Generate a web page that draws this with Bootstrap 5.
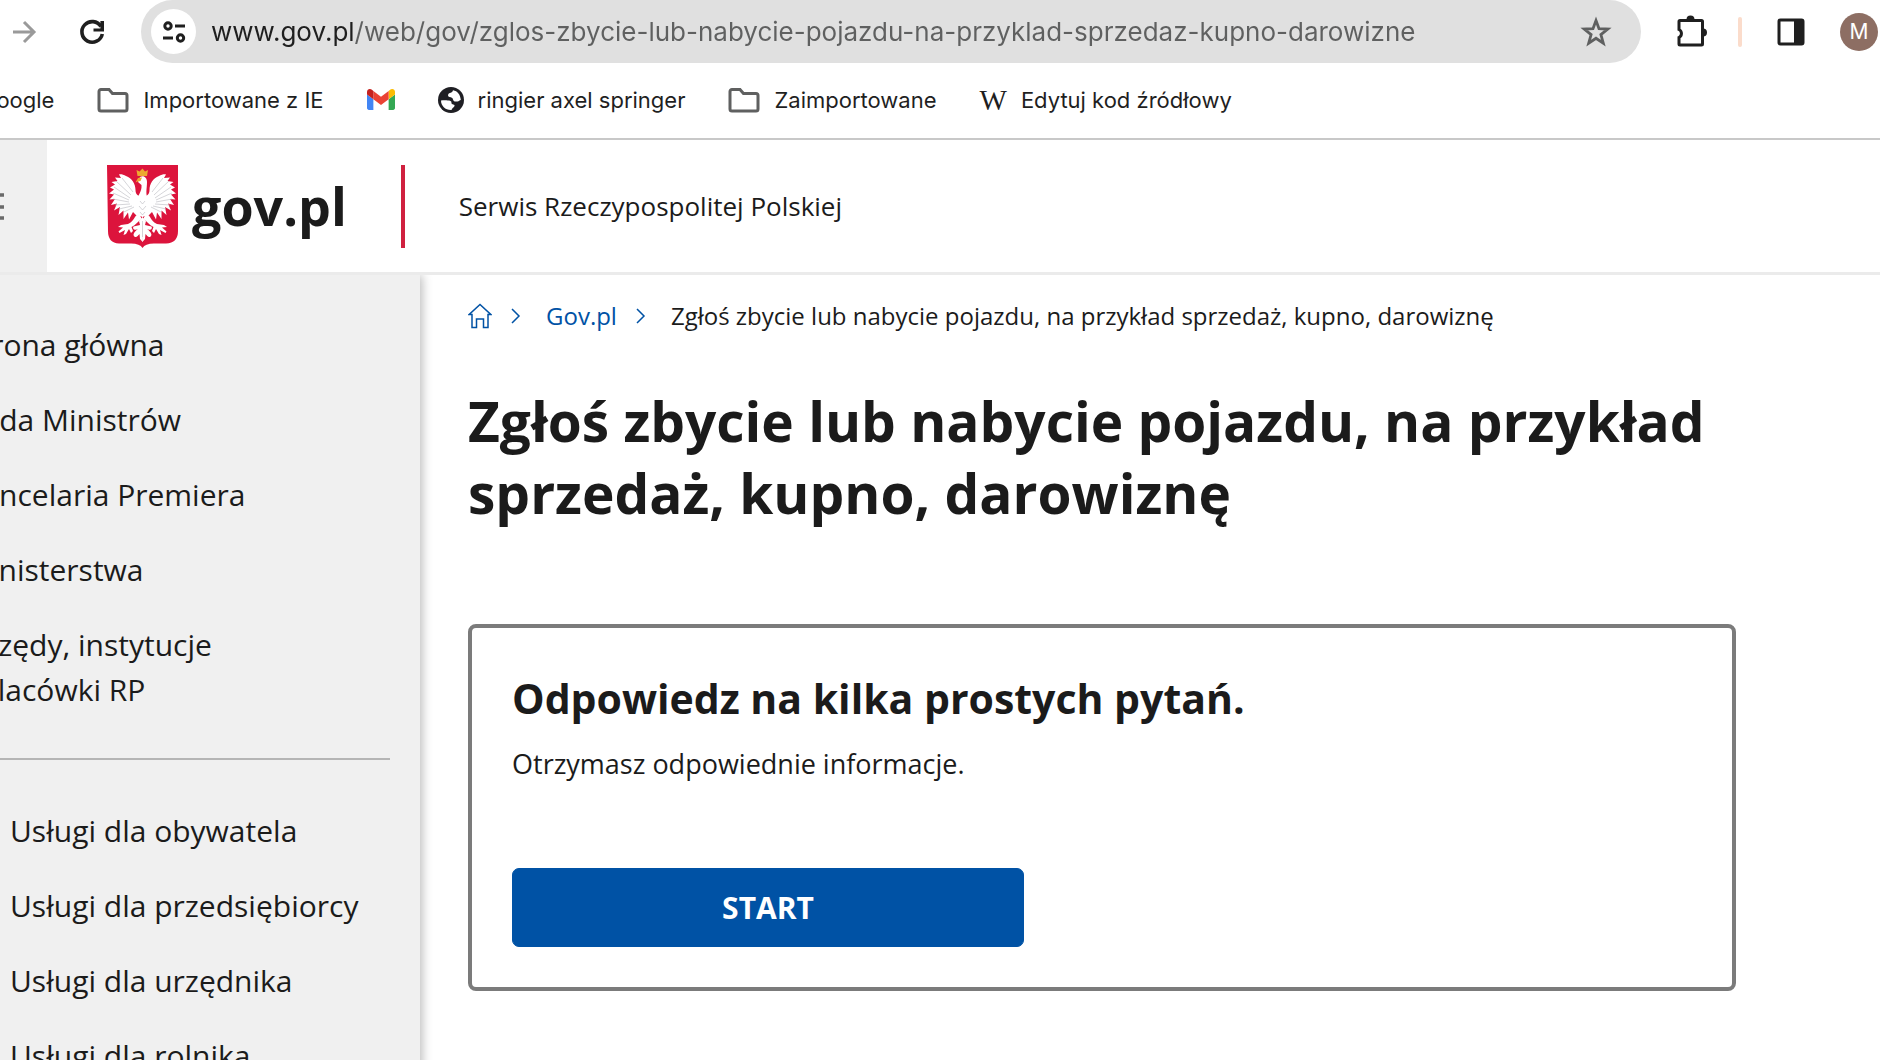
<!DOCTYPE html>
<html lang="pl">
<head>
<meta charset="utf-8">
<meta name="viewport" content="width=device-width, initial-scale=1">
<title>Zgłoś zbycie lub nabycie pojazdu - Gov.pl</title>
<link href="https://cdn.jsdelivr.net/npm/bootstrap@5.3.0/dist/css/bootstrap.min.css" rel="stylesheet">
<style>
  :root { --ink: #1b1b1b; --gov-blue: #0052a5; --panel: #f0f0f0; --rule: #ebebeb; }
  body { font-family: "Open Sans", "Noto Sans", sans-serif; color: var(--ink); background: #fff; }
  svg { display: block; flex: none; }

  /* browser chrome */
  .chrome-ui { font-family: Inter, Roboto, sans-serif; height: 140px; border-bottom: 2px solid #c8c8c8; }
  .toolbar { height: 63px; padding: 0 2px 0 9px; }
  .icon-btn { border: 0; padding: 0; background: none; color: #1f1f1f; }
  .reload { margin-left: 38px; }
  .address { background: #e0e0e0; height: 63px; margin: 0 34px; padding: 0 29px 0 10px; gap: 15px; }
  .site-info { width: 45px; height: 45px; background: #fff; }
  .url-input { border: 0; outline: 0; min-width: 0; padding: 0; font-size: 26px; line-height: 40px; color: #5f6060;
    background: linear-gradient(to right, #1f1f1f 144px, #5f6060 144px); -webkit-background-clip: text; background-clip: text;
    -webkit-text-fill-color: transparent; }
  .peach { width: 4px; height: 30px; margin: 0 35px 0 31px; background: #fbdccb; }
  .avatar { width: 38px; height: 38px; margin-left: 35px; background: #8d6e63; color: #fff; font-size: 21px; }
  .bookmarks { height: 73px; gap: 43px; font-size: 22px; line-height: 32px; }
  .bookmarks a { color: #1f1f1f; text-decoration: none; gap: 14px; white-space: nowrap; }
  .bookmarks .first-mark { margin-left: -20px; }
  .wiki { font-family: "Liberation Serif", serif; font-size: 29px; }

  /* portal header */
  .portal-head { height: 135px; border-bottom: 3px solid var(--rule); background: #fff; z-index: 1; }
  .menu-btn { width: 47px; border: 0; padding: 2px 0 0; background: var(--panel); overflow: hidden; }
  .menu-btn svg { margin-left: -26px; }
  .brand { color: var(--ink); text-decoration: none; margin-left: 60px; gap: 14px; }
  .brand-name { font-size: 52px; line-height: 72px; font-weight: 700; }
  .brand-rule { width: 4px; height: 83px; background: #d0213f; margin: 0 54px; }
  .tagline { font-size: 26px; line-height: 40px; }

  /* side navigation */
  .side { width: 420px; flex: none; background: var(--panel); box-shadow: 2px 0 10px rgba(0,0,0,.28); overflow: hidden; }
  .side-in { margin-left: -36px; padding: 47px 30px 0 0; }
  .side a { display: block; color: var(--ink); text-decoration: none; font-size: 30px; line-height: 45px; padding: 0 0 30px; }
  .side hr { margin: 16px 0 48px; border-top: 2px solid #b5b5b5; opacity: 1; }
  .side .services { padding-left: 46px; }

  /* content */
  .content { padding: 19px 48px; }
  .crumbs { font-size: 24px; line-height: 44px; }
  .crumbs a, .crumbs svg { color: var(--gov-blue); text-decoration: none; }
  .title { font-size: 55px; line-height: 72px; font-weight: 700; margin: 47px 0 95px; max-width: 1268px; }
  .wizard { border: 4px solid #7b7b7b; border-radius: 8px; max-width: 1268px; padding: 40px; }
  .wizard h2 { font-size: 41px; line-height: 60px; font-weight: 700; margin: 0 0 16px; }
  .wizard p { font-size: 27px; line-height: 40px; margin: 0 0 84px; }
  .start-btn { --bs-btn-bg: var(--gov-blue); --bs-btn-border-color: var(--gov-blue); width: 512px; height: 79px; border-radius: 7px; font-size: 30px; font-weight: 700; }
</style>
<script src="https://cdn.jsdelivr.net/npm/bootstrap@5.3.0/dist/js/bootstrap.bundle.min.js"></script>
</head>
<body>
<div class="d-flex flex-column vh-100 overflow-hidden">

  <div class="chrome-ui flex-shrink-0">
    <div class="toolbar d-flex align-items-center">
      <button class="icon-btn" aria-label="Dalej"><svg width="30" height="30" viewBox="0 0 30 30" fill="none" stroke="#9a9a9a" stroke-width="3"><path d="M4 15H24M15 5l10 10L15 25"/></svg></button>
      <button class="icon-btn reload" aria-label="Odśwież"><svg width="30" height="30" viewBox="0 0 30 30"><path d="M24 9.500A10.300 10.300 0 1 0 25.300 17" fill="none" stroke="#1f1f1f" stroke-width="3.600"/><path d="M27 4v10.500H16.500v-3H23.400V4z" fill="#1f1f1f"/></svg></button>
      <div class="address d-flex align-items-center flex-grow-1 rounded-pill">
        <button class="icon-btn site-info rounded-circle d-flex align-items-center justify-content-center flex-shrink-0" aria-label="Informacje o witrynie"><svg width="24" height="24" viewBox="0 0 24 24" fill="none" stroke="#1f1f1f" stroke-width="3"><circle cx="6" cy="6" r="3.200"/><path d="M13 6h10M1 18h10"/><circle cx="18.500" cy="18" r="3.200"/></svg></button>
        <input class="url-input flex-grow-1" type="text" aria-label="Adres" value="www.gov.pl/web/gov/zglos-zbycie-lub-nabycie-pojazdu-na-przyklad-sprzedaz-kupno-darowizne">
        <button class="icon-btn" aria-label="Dodaj zakładkę"><svg width="32" height="32" viewBox="0 0 32 32"><path d="M16 4.500l3 8.200 8.800.4-6.900 5.500 2.400 8.600L16 22.300l-7.300 4.900 2.400-8.600-6.900-5.500 8.800-.4z" fill="none" stroke="#5f6060" stroke-width="2.800"/></svg></button>
      </div>
      <div class="d-flex align-items-center">
        <button class="icon-btn" aria-label="Rozszerzenia"><svg width="32" height="36" viewBox="0 0 32 36"><path d="M5 6.500h21.500a1 1 0 0 1 1 1V30a1 1 0 0 1-1 1H5a1 1 0 0 1-1-1v-6.500a4.500 4.500 0 0 0 0-8V7.500a1 1 0 0 1 1-1z" fill="none" stroke="#1f1f1f" stroke-width="3"/><path d="M11.500 5.500a4 4 0 0 1 8 0zM28 14.500a4 4 0 0 1 0 8z" fill="#1f1f1f"/></svg></button>
        <span class="peach rounded-pill"></span>
        <button class="icon-btn" aria-label="Panel boczny"><svg width="28" height="28" viewBox="0 0 28 28"><rect x="2" y="2" width="24" height="24" rx="1.500" fill="none" stroke="#1f1f1f" stroke-width="3"/><path d="M17 2h9v24h-9z" fill="#1f1f1f"/></svg></button>
        <button class="icon-btn avatar rounded-circle" aria-label="Profil">M</button>
      </div>
    </div>
    <nav class="bookmarks d-flex align-items-center overflow-hidden" aria-label="Zakładki">
      <a class="first-mark" href="#">Google</a>
      <a class="d-flex align-items-center" href="#"><svg width="32" height="26" viewBox="0 0 32 26"><path d="M4 2.500h8l3.500 4H28a2 2 0 0 1 2 2V22a2 2 0 0 1-2 2H4a2 2 0 0 1-2-2V4.500a2 2 0 0 1 2-2z" fill="none" stroke="#5f6060" stroke-width="3"/></svg>Importowane z IE</a>
      <a href="#" aria-label="Gmail"><svg width="28" height="21" viewBox="52 42 88 66"><path fill="#4285f4" d="M58 108h14V74L52 59v43c0 3.320 2.690 6 6 6"/><path fill="#34a853" d="M120 108h14c3.320 0 6-2.690 6-6V59l-20 15"/><path fill="#fbbc04" d="M120 48v26l20-15v-8c0-7.420-8.470-11.650-14.400-7.200"/><path fill="#ea4335" d="M72 74V48l24 18 24-18v26L96 92"/><path fill="#c5221f" d="M52 51v8l20 15V48l-5.600-4.200c-5.940-4.450-14.400-.22-14.400 7.200"/></svg></a>
      <a class="d-flex align-items-center" href="#"><svg width="26" height="26" viewBox="0 0 26 26"><circle cx="13" cy="13" r="13" fill="#1f1f24"/><path d="M3 13.500c3-.3 7-.3 9.500.5 1.500.5.500 2.500 1.500 3 1.500.8 3 .5 2.500 2-.5 1.500-2.500 2-3 4C7.500 23.300 3 19 3 13.500zM15 3.300c-.5 1.700-1 2.200-3 2.700-2.500.6-2.500 3.500-.5 4 2 .4 3 .6 3.500 2.500.6 2.400 2.500 2.200 4.500 2 1.500-.2 2-1.500 3.300-1.500C22.500 8 19.500 4 15 3.300z" fill="#fff"/></svg>ringier axel springer</a>
      <a class="d-flex align-items-center" href="#"><svg width="32" height="26" viewBox="0 0 32 26"><path d="M4 2.500h8l3.500 4H28a2 2 0 0 1 2 2V22a2 2 0 0 1-2 2H4a2 2 0 0 1-2-2V4.500a2 2 0 0 1 2-2z" fill="none" stroke="#5f6060" stroke-width="3"/></svg>Zaimportowane</a>
      <a class="d-flex align-items-center" href="#"><span class="wiki">W</span>Edytuj kod źródłowy</a>
    </nav>
  </div>

  <header class="portal-head position-relative d-flex align-items-stretch flex-shrink-0">
    <button class="menu-btn" aria-label="Menu"><svg width="30" height="28" viewBox="0 0 30 28"><path d="M0 2h30M0 14h30M0 25h30" stroke="#6a6a6a" stroke-width="3.500"/></svg></button>
    <div class="d-flex align-items-center">
      <a class="brand d-flex align-items-center" href="#">
        <svg width="71" height="83" viewBox="0 0 71 83">
          <path d="M0 0H71V66Q71 78 59 78.500H47Q38 78.500 35.500 83Q33 78.500 24 78.500H12Q1 78 1 66Z" fill="#dc143c"/>
          <defs><g id="half">
            <path d="M36 52L36 30C32 32 28.500 30 28.500 25C28.500 19 25 13 19 11C16.500 9.800 14 9 12 9.500L14 13L8 12.500L10.500 16L4.500 17L8 19.500L3 22.500L7 24.500L2 28.500L7 29.500L2.500 34.500L8 34L4 40L10 38.500L7 45.500L13 42L11.500 50L16.500 45.500L16.500 54L21 47.500L22 54.500L26 47L29 50Z"/>
            <path d="M32 49C27 50 28 56 21 59L14 60L11 62L16 62.500L11.500 66.500L12.500 68L18 65L16.500 70L19 69L22 64L24 68L26 66L24.500 62C29 60 31 56 35 54Z"/>
            <path d="M36 52L32 56L33 60L26.500 61.500C25 64 28 66 31 64C27 67 25 70 28 72C30 72.500 31 70.500 32.500 69L33 74L35.700 77Z"/>
          </g></defs>
          <g fill="#fff"><use href="#half"/><use href="#half" transform="matrix(-1 0 0 1 71 0)"/>
            <path d="M30 36C31 29 35 27 34.500 20L31 17L33 12C37 10 40 13 40 17C40 24 38 29 41.500 36Z"/></g>
          <path d="M28.500 17.500L31 13L35 12.500L33.500 16L30.500 16.500zM30.500 11L29.500 5L32.500 6.500L35.500 3.500L38 6.500L41 5L40 11z" fill="#eda92f"/>
          <g fill="none" stroke="#b9b9c0" stroke-width=".6"><path d="M9 16L24 30M7 22L23 33M6 28L22 35M6 34L22 37M8 40L23 39M12 44L25 41M17 47L27 42M15 13L26 27"/><path d="M62 16L47 30M64 22L48 33M65 28L49 35M65 34L49 37M63 40L48 39M59 44L46 41M54 47L44 42M56 13L45 27"/><path d="M33 36L35.500 39L38 36M32 41L35.500 45L39 41M33 47L35.500 50L38 47M35.500 56V72"/></g>
        </svg>
        <span class="brand-name">gov.pl</span>
      </a>
      <span class="brand-rule"></span>
      <span class="tagline">Serwis Rzeczypospolitej Polskiej</span>
    </div>
  </header>

  <div class="d-flex flex-grow-1">
    <aside class="side">
      <nav class="side-in" aria-label="Menu główne">
        <a href="#">Strona główna</a>
        <a href="#">Rada Ministrów</a>
        <a href="#">Kancelaria Premiera</a>
        <a href="#">Ministerstwa</a>
        <a href="#">Urzędy, instytucje<br>i placówki RP</a>
        <hr>
        <div class="services">
          <a href="#">Usługi dla obywatela</a>
          <a href="#">Usługi dla przedsiębiorcy</a>
          <a href="#">Usługi dla urzędnika</a>
          <a href="#">Usługi dla rolnika</a>
        </div>
      </nav>
    </aside>
    <main class="content flex-grow-1">
      <nav class="crumbs d-flex align-items-center" aria-label="Okruszki">
        <a href="#" aria-label="Strona główna"><svg width="24" height="26" viewBox="0 0 24 26" fill="none" stroke="currentColor" stroke-width="1.500"><path d="M4 11.500H1.200L12 1.500l10.800 10H20V24.500H15.500V16H8.500V24.500H4z"/></svg></a>
        <svg class="mx-3" width="14" height="16" viewBox="0 0 14 16" fill="none" stroke="currentColor" stroke-width="1.500"><path d="M4 1l7 7-7 7"/></svg>
        <a class="ms-2" href="#">Gov.pl</a>
        <svg class="mx-3" width="14" height="16" viewBox="0 0 14 16" fill="none" stroke="currentColor" stroke-width="1.500"><path d="M4 1l7 7-7 7"/></svg>
        <span class="ms-2">Zgłoś zbycie lub nabycie pojazdu, na przykład sprzedaż, kupno, darowiznę</span>
      </nav>
      <h1 class="title">Zgłoś zbycie lub nabycie pojazdu, na przykład sprzedaż, kupno, darowiznę</h1>
      <section class="wizard">
        <h2>Odpowiedz na kilka prostych pytań.</h2>
        <p>Otrzymasz odpowiednie informacje.</p>
        <button class="btn btn-primary start-btn" type="button">START</button>
      </section>
    </main>
  </div>
</div>
</body>
</html>
